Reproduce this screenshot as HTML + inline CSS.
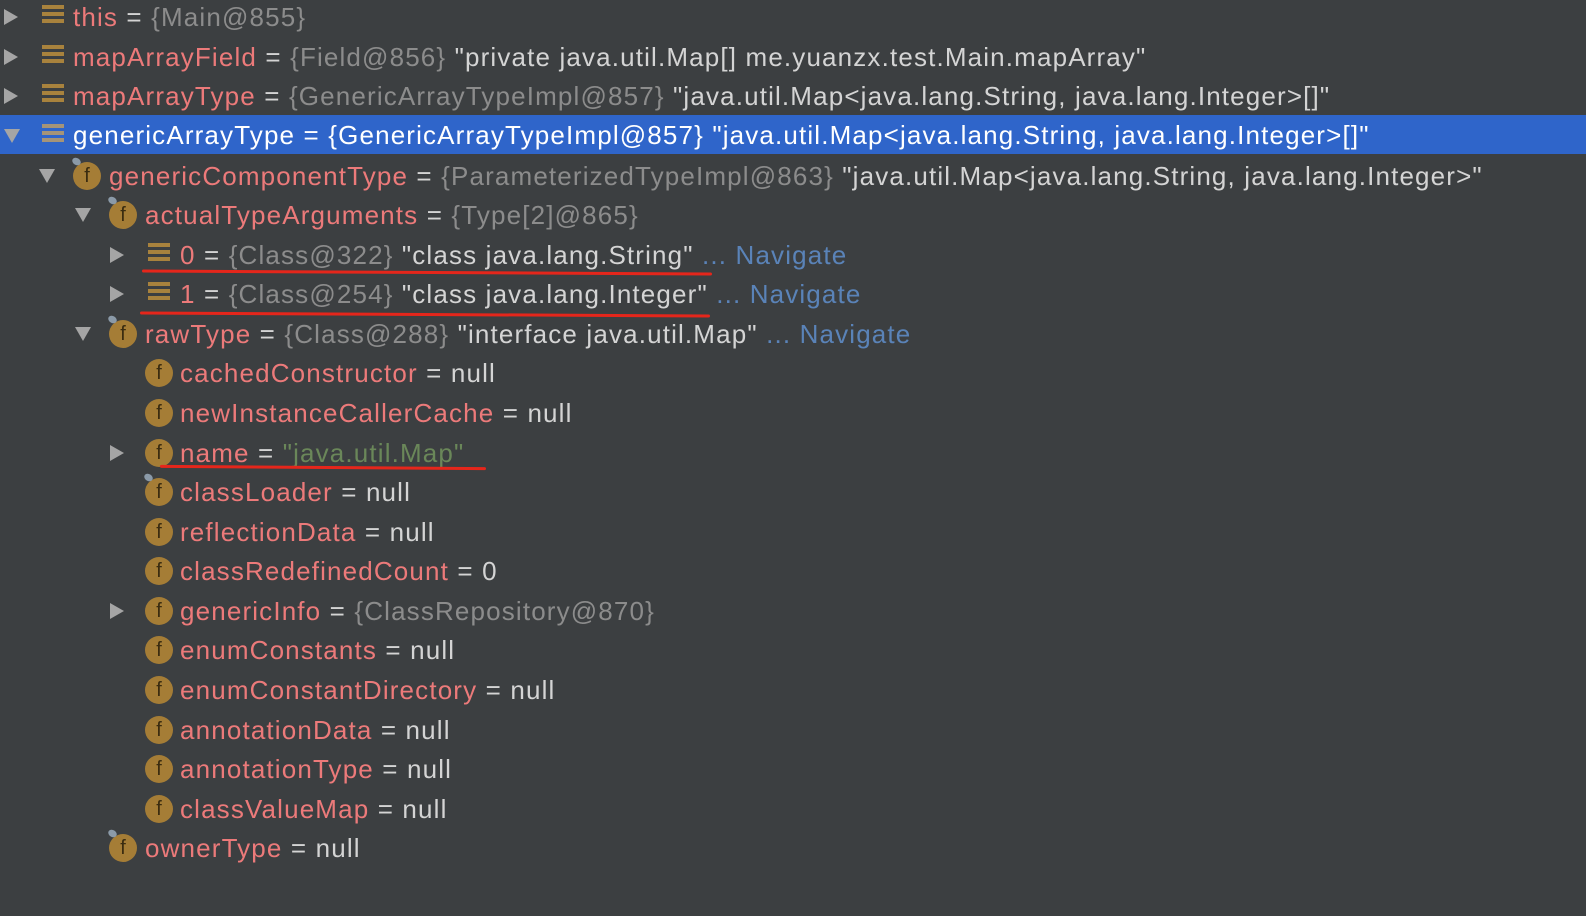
<!DOCTYPE html>
<html><head><meta charset="utf-8"><style>
body{margin:0;width:1586px;height:916px;background:#3c3f41;overflow:hidden;font-family:"Liberation Sans",sans-serif;font-size:26px;letter-spacing:1.15px}
.r{position:absolute;left:0;width:1586px;height:40px;line-height:40px;white-space:nowrap;color:#d4d4d4}
.sel{background:#2f65ca;color:#fff}
.n{color:#ec7a7a}.sel .n{color:#fff}
.g{color:#8c8c8c}.sel .g{color:#fff}
.s{color:#6a8759}.b{color:#5a83b8}
.t{position:absolute;top:1px}
.ar{position:absolute;width:0;height:0}
.ar.c{top:13px;border-top:8px solid transparent;border-bottom:8px solid transparent;border-left:14px solid #a5a5a5}
.ar.o{top:14px;border-left:8px solid transparent;border-right:8px solid transparent;border-top:14px solid #a5a5a5}
.ic{position:absolute;top:9px;width:22px;height:22px}
.ic i{display:block;height:4px;margin-bottom:3px;background:#a8823d}
.sel .ic i{background:#a59478}
.f{position:absolute;top:7px;width:28px;height:28px;border-radius:50%;background:#a57d36;color:#3a2c10;font-size:20px;line-height:28px;text-align:center;letter-spacing:0;font-family:"Liberation Sans",sans-serif}
.p{position:absolute;width:9px;height:7px;background:#8b9aa8;border-radius:50%;transform:rotate(30deg)}
.u{position:absolute;height:3px;background:#e5261b;border-radius:2px}
</style></head><body>
<div class="r" style="top:-4px"><div class="ar c" style="left:4px"></div><div class="ic" style="left:42px"><i></i><i></i><i></i></div><span class="t" style="left:73px"><span class="n">this</span> = <span class="g">{Main@855}</span></span></div>
<div class="r" style="top:36px"><div class="ar c" style="left:4px"></div><div class="ic" style="left:42px"><i></i><i></i><i></i></div><span class="t" style="left:73px"><span class="n">mapArrayField</span> = <span class="g">{Field@856}</span> "private java.util.Map[] me.yuanzx.test.Main.mapArray"</span></div>
<div class="r" style="top:75px"><div class="ar c" style="left:4px"></div><div class="ic" style="left:42px"><i></i><i></i><i></i></div><span class="t" style="left:73px"><span class="n">mapArrayType</span> = <span class="g">{GenericArrayTypeImpl@857}</span> "java.util.Map&lt;java.lang.String, java.lang.Integer&gt;[]"</span></div>
<div class="r sel" style="top:115px;height:39px"><div class="ar o" style="left:4px"></div><div class="ic" style="left:42px"><i></i><i></i><i></i></div><span class="t" style="left:73px;top:0"><span class="n">genericArrayType</span> = <span class="g">{GenericArrayTypeImpl@857}</span> "java.util.Map&lt;java.lang.String, java.lang.Integer&gt;[]"</span></div>
<div class="r" style="top:155px"><div class="ar o" style="left:39px"></div><div class="f" style="left:73px">f</div><div class="p" style="left:72px;top:3px"></div><span class="t" style="left:109px"><span class="n">genericComponentType</span> = <span class="g">{ParameterizedTypeImpl@863}</span> "java.util.Map&lt;java.lang.String, java.lang.Integer&gt;"</span></div>
<div class="r" style="top:194px"><div class="ar o" style="left:75px"></div><div class="f" style="left:109px">f</div><div class="p" style="left:108px;top:3px"></div><span class="t" style="left:145px"><span class="n">actualTypeArguments</span> = <span class="g">{Type[2]@865}</span></span></div>
<div class="r" style="top:234px"><div class="ar c" style="left:110px"></div><div class="ic" style="left:148px"><i></i><i></i><i></i></div><span class="t" style="left:180px"><span class="n">0</span> = <span class="g">{Class@322}</span> "class java.lang.String" <span class="b">... Navigate</span></span></div>
<div class="r" style="top:273px"><div class="ar c" style="left:110px"></div><div class="ic" style="left:148px"><i></i><i></i><i></i></div><span class="t" style="left:180px"><span class="n">1</span> = <span class="g">{Class@254}</span> "class java.lang.Integer" <span class="b">... Navigate</span></span></div>
<div class="r" style="top:313px"><div class="ar o" style="left:75px"></div><div class="f" style="left:109px">f</div><div class="p" style="left:108px;top:3px"></div><span class="t" style="left:145px"><span class="n">rawType</span> = <span class="g">{Class@288}</span> "interface java.util.Map" <span class="b">... Navigate</span></span></div>
<div class="r" style="top:352px"><div class="f" style="left:145px">f</div><span class="t" style="left:180px"><span class="n">cachedConstructor</span> = null</span></div>
<div class="r" style="top:392px"><div class="f" style="left:145px">f</div><span class="t" style="left:180px"><span class="n">newInstanceCallerCache</span> = null</span></div>
<div class="r" style="top:432px"><div class="ar c" style="left:110px"></div><div class="f" style="left:145px">f</div><span class="t" style="left:180px"><span class="n">name</span> = <span class="s">"java.util.Map"</span></span></div>
<div class="r" style="top:471px"><div class="f" style="left:145px">f</div><div class="p" style="left:144px;top:3px"></div><span class="t" style="left:180px"><span class="n">classLoader</span> = null</span></div>
<div class="r" style="top:511px"><div class="f" style="left:145px">f</div><span class="t" style="left:180px"><span class="n">reflectionData</span> = null</span></div>
<div class="r" style="top:550px"><div class="f" style="left:145px">f</div><span class="t" style="left:180px"><span class="n">classRedefinedCount</span> = 0</span></div>
<div class="r" style="top:590px"><div class="ar c" style="left:110px"></div><div class="f" style="left:145px">f</div><span class="t" style="left:180px"><span class="n">genericInfo</span> = <span class="g">{ClassRepository@870}</span></span></div>
<div class="r" style="top:629px"><div class="f" style="left:145px">f</div><span class="t" style="left:180px"><span class="n">enumConstants</span> = null</span></div>
<div class="r" style="top:669px"><div class="f" style="left:145px">f</div><span class="t" style="left:180px"><span class="n">enumConstantDirectory</span> = null</span></div>
<div class="r" style="top:709px"><div class="f" style="left:145px">f</div><span class="t" style="left:180px"><span class="n">annotationData</span> = null</span></div>
<div class="r" style="top:748px"><div class="f" style="left:145px">f</div><span class="t" style="left:180px"><span class="n">annotationType</span> = null</span></div>
<div class="r" style="top:788px"><div class="f" style="left:145px">f</div><span class="t" style="left:180px"><span class="n">classValueMap</span> = null</span></div>
<div class="r" style="top:827px"><div class="f" style="left:109px">f</div><div class="p" style="left:108px;top:3px"></div><span class="t" style="left:145px"><span class="n">ownerType</span> = null</span></div>
<div class="u" style="left:142px;top:271px;width:570px;transform:rotate(0.3deg)"></div>
<div class="u" style="left:140px;top:313px;width:570px;transform:rotate(0.3deg)"></div>
<div class="u" style="left:160px;top:466px;width:326px;transform:rotate(0.4deg)"></div>
</body></html>
